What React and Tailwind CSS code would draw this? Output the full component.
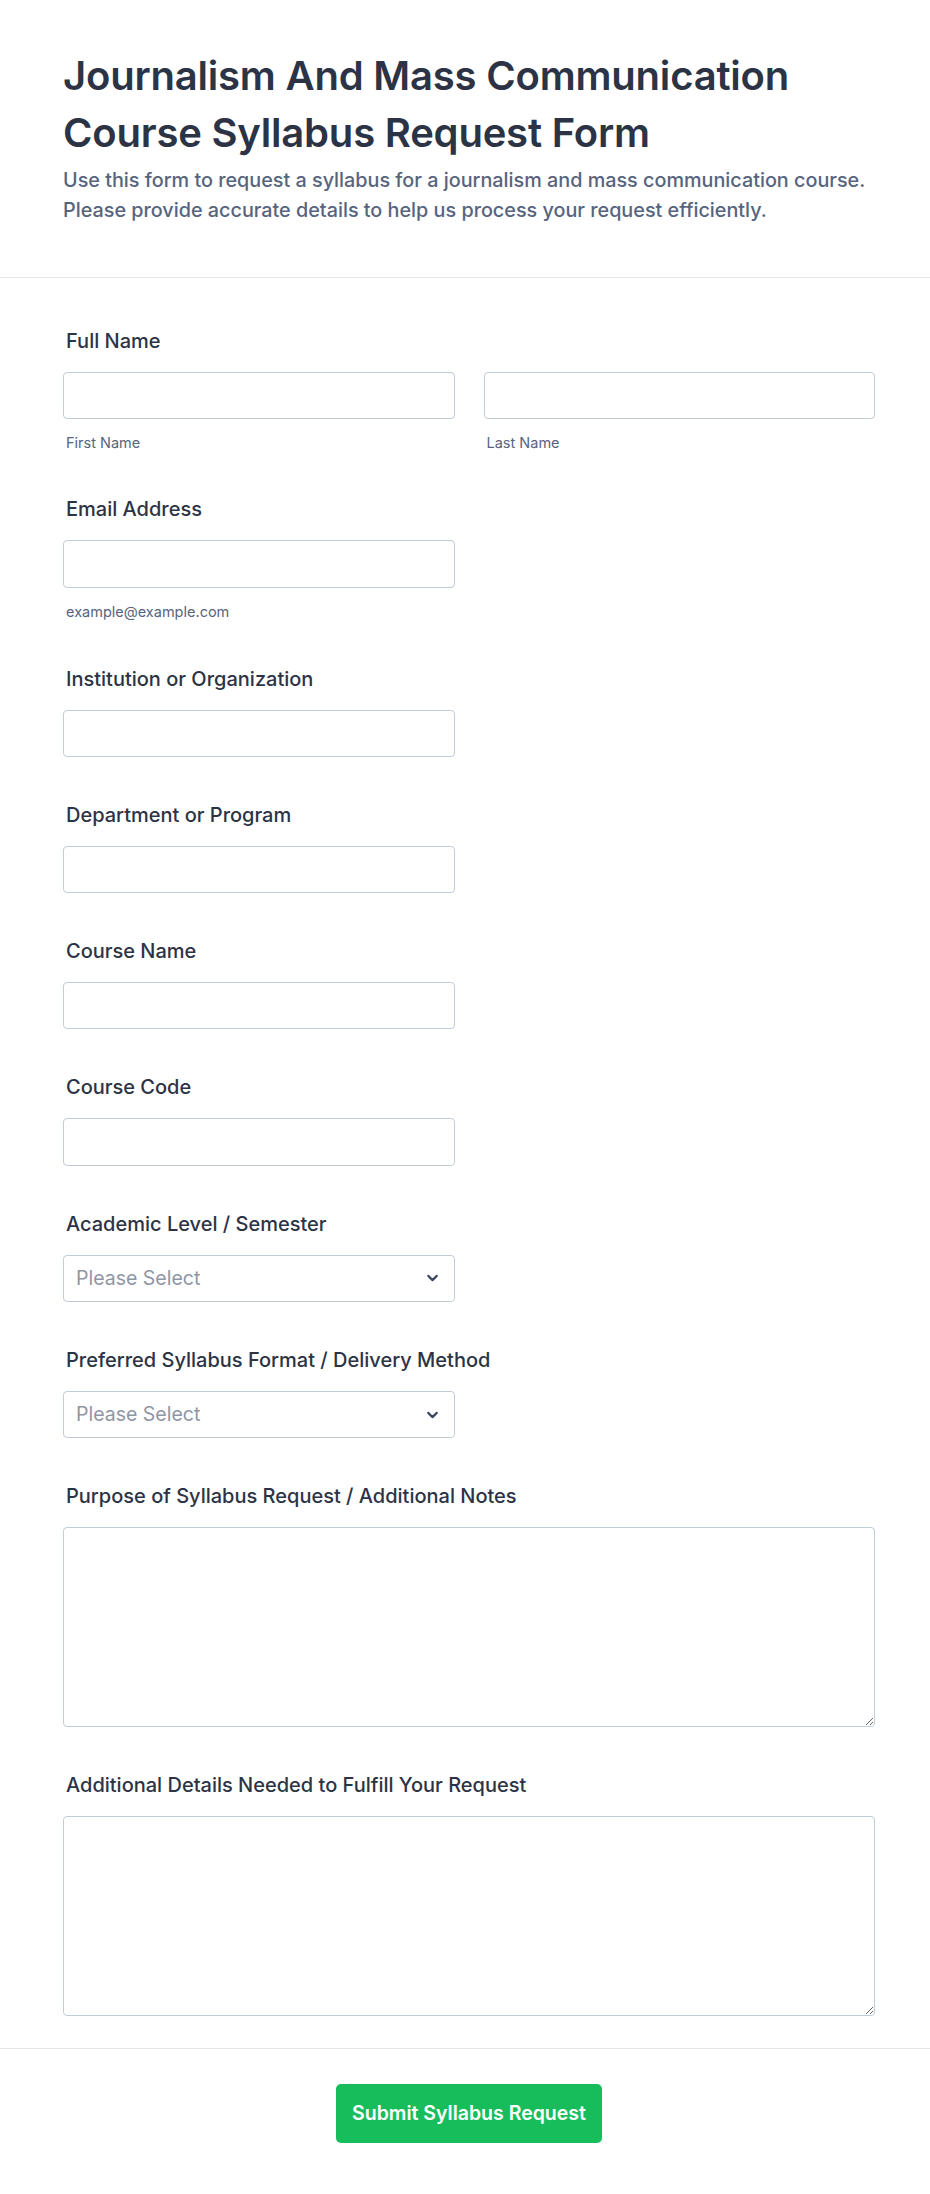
import { ChevronDown } from 'lucide-react';

function Field({ label, children }) {
  return (
    <div className="pb-[46px]">
      <label className="block pl-[3px] text-[20px] leading-[24px] font-medium text-[#2c3345] mb-[19px]">{label}</label>
      {children}
    </div>
  );
}

function TextInput() {
  return <input type="text" className="block w-full h-[47.3px] rounded-[4px] border border-[#c3cad8] bg-white px-3 outline-none" />;
}

function Select() {
  return (
    <div className="relative h-[47.3px] rounded-[4px] border border-[#c3cad8] bg-white flex items-center px-3">
      <span className="text-[19.5px] text-[#8f96a3]">Please Select</span>
      <ChevronDown size={17} strokeWidth={3} className="absolute right-[13px] top-1/2 -translate-y-1/2 text-[#3c4660]" />
    </div>
  );
}

export default function App() {
  return (
    <div className="min-h-screen bg-white font-['Inter',sans-serif] text-[#2c3345]">
      {/* Header */}
      <div className="pl-[63px] pr-[55px] pt-[47px] pb-[52px] border-b border-[#e3e5eb]">
        <h1 className="text-[40px] leading-[57px] font-semibold tracking-[-0.2px] text-[#2c3345]">
          Journalism And Mass Communication Course Syllabus Request Form
        </h1>
        <p className="mt-[4px] text-[19.8px] leading-[30px] font-medium text-[#57647e]">
          Use this form to request a syllabus for a journalism and mass communication course.
          <br />
          Please provide accurate details to help us process your request efficiently.
        </p>
      </div>

      {/* Form */}
      <div className="pl-[63px] pr-[55px] pt-[51px]">
        <div className="pb-[44px]">
          <label className="block pl-[3px] text-[20px] leading-[24px] font-medium mb-[19px]">Full Name</label>
          <div className="grid grid-cols-2 gap-[29px]">
            <div>
              <TextInput />
              <div className="pl-[3px] mt-[14px] text-[14.5px] leading-[20px] text-[#57647e]">First Name</div>
            </div>
            <div>
              <TextInput />
              <div className="pl-[3px] mt-[14px] text-[14.5px] leading-[20px] text-[#57647e]">Last Name</div>
            </div>
          </div>
        </div>

        <div className="pb-[45px]">
          <label className="block pl-[3px] text-[20px] leading-[24px] font-medium mb-[19px]">Email Address</label>
          <div className="grid grid-cols-2 gap-[29px]">
            <div>
              <TextInput />
              <div className="pl-[3px] mt-[14px] text-[14.5px] leading-[20px] text-[#57647e]">example@example.com</div>
            </div>
          </div>
        </div>

        {['Institution or Organization', 'Department or Program', 'Course Name', 'Course Code'].map(l => (
          <Field key={l} label={l}>
            <div className="grid grid-cols-2 gap-[29px]">
              <TextInput />
            </div>
          </Field>
        ))}

        {['Academic Level / Semester', 'Preferred Syllabus Format / Delivery Method'].map(l => (
          <Field key={l} label={l}>
            <div className="grid grid-cols-2 gap-[29px]">
              <Select />
            </div>
          </Field>
        ))}

        <Field label="Purpose of Syllabus Request / Additional Notes">
          <textarea className="block w-full h-[200px] rounded-[4px] border border-[#c3cad8] bg-white p-3 outline-none" />
        </Field>

        <div className="pb-[32px]">
          <label className="block pl-[3px] text-[20px] leading-[24px] font-medium mb-[19px]">Additional Details Needed to Fulfill Your Request</label>
          <textarea className="block w-full h-[200px] rounded-[4px] border border-[#c3cad8] bg-white p-3 outline-none" />
        </div>
      </div>

      {/* Footer */}
      <div className="border-t border-[#e3e5eb] pl-[63px] pr-[55px] pt-[35px] pb-[48px] flex justify-center">
        <button className="h-[59px] px-[16px] rounded-[5px] bg-[#18bd5b] text-white text-[19.5px] font-semibold">
          Submit Syllabus Request
        </button>
      </div>
    </div>
  );
}
